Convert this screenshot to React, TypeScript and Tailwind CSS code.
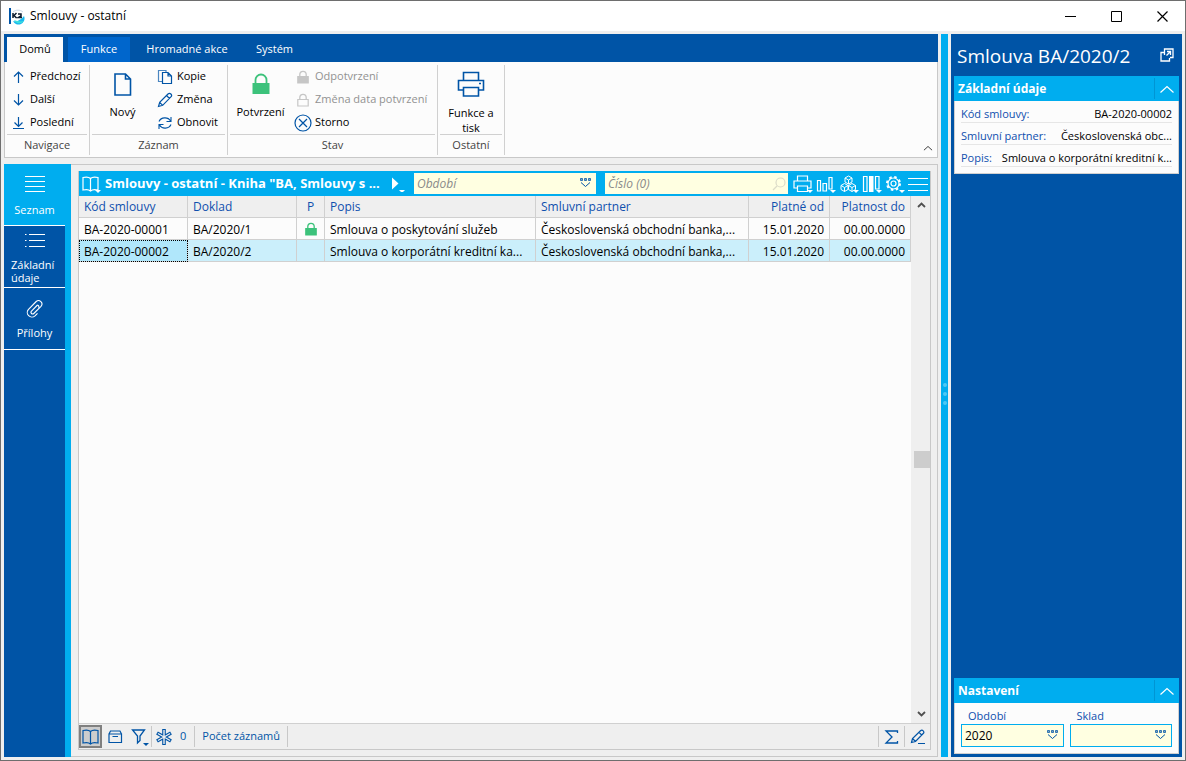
import React from "react";

type IconProps = { className?: string; size?: number };
type SvgProps = IconProps & { children: React.ReactNode; box?: number };

function Svg({ className = "", size = 16, box, children }: SvgProps) {
  const b = box ?? size;
  return (
    <svg
      className={"shrink-0 " + className}
      width={size}
      height={size}
      viewBox={`0 0 ${b} ${b}`}
      fill="none"
      stroke="currentColor"
      strokeWidth="1.2"
      aria-hidden="true"
    >
      {children}
    </svg>
  );
}

const ArrowUp = () => <Svg><path d="M8.500 14V3M4 7.500 8.500 3 13 7.500" /></Svg>;
const ArrowDown = () => <Svg><path d="M8.500 2v11M4 8.500 8.500 13 13 8.500" /></Svg>;
const ArrowLast = () => <Svg><path d="M8.500 2v9.500M4.500 7.500l4 4 4-4M3 13.500h11" /></Svg>;
const NewDoc = () => (
  <Svg size={26} className="text-[#0054a6]">
    <path strokeWidth="1.600" d="M5 3h10.500L20.500 8V24H5zM15.500 3v5h5" />
  </Svg>
);
const Copy = () => (
  <Svg>
    <path d="M5 12.500H1.500v-11h7.500v2" opacity=".7" />
    <path d="M5.500 3.500h5.500l3.500 3.500v7.500h-9zM11 3.500V7h3.500" />
  </Svg>
);
const Pencil = () => (
  <Svg><path d="M1.500 14.500l1.200-4.200L11 2a1.900 1.900 0 0 1 2.900 2.900L5.700 13.300zM2.700 10.300l3 3M9.500 3.500l3 3" /></Svg>
);
const Refresh = () => (
  <Svg><path strokeWidth="1.100" d="M2 6.500C4 2 11 1.500 13.500 6M14 2v4.500H9.500M14 9.500c-2 4.500-9 5-11.500.500M2 14V9.500h4.500" /></Svg>
);
const LockBig = () => (
  <Svg size={26} className="text-[#3cc27b]">
    <path strokeWidth="1.800" d="M7.500 13V9a5.500 5.500 0 0 1 11 0v4" />
    <path fill="currentColor" stroke="none" d="M4.500 12h17v11h-17z" />
  </Svg>
);
function LockSmall({ filled = true, className = "" }: { filled?: boolean; className?: string }) {
  return (
    <Svg size={14} className={className}>
      <path strokeWidth="1.300" d="M3.800 7V4.500a3.200 3.200 0 0 1 6.400 0V7" />
      <path fill={filled ? "currentColor" : "none"} d="M1.800 6.500h10.400v6.500H1.800z" />
    </Svg>
  );
}
const Cancel = () => (
  <Svg size={18}><circle cx="9" cy="9" r="8" /><path d="m5 5 8 8M13 5l-8 8" /></Svg>
);
const PrinterBig = () => (
  <Svg size={28} className="text-[#0054a6]">
    <path strokeWidth="1.600" d="M6.500 10.500V2.500h15v8M6.500 20H1.500v-9.500h25V20h-5M6.500 17.500h15V26h-15zM22 13.500h2" />
  </Svg>
);
const Caret = () => <path d="M14 16h6l-3 3z" fill="currentColor" stroke="none" />;
const Book = ({ caret = false }: { caret?: boolean }) => (
  <Svg size={20}>
    <path d="M9.500 4.500c-1.500-1.500-5.500-1.500-7.500-1v12.500c2-.500 6-.500 7.500 1 1.500-1.500 5.500-1.500 7.500-1V3.500c-2-.500-6-.500-7.500 1zM9.500 4.500V17" />
    {caret && <Caret />}
  </Svg>
);
const Printer = () => (
  <Svg size={20}>
    <path d="M4.500 7V2h10v5M4.500 14H1V7h17v7h-3.500M4.500 12h10v5.500h-10z" /><Caret />
  </Svg>
);
const Chart = () => (
  <Svg size={20}><path d="M1.500 6.500h3V17h-3zM7 9.500h3.500V17H7zM13 3.500h3V15h-3z" /><Caret /></Svg>
);
const Cubes = () => (
  <Svg size={20}>
    <path strokeWidth="1" d="m9.500 2 3.500 2v4l-3.500 2L6 8V4zM6 4l3.500 2L13 4M9.500 6v4M5.500 9.500l3.500 2v4l-3.500 2-3.500-2v-4zM2 11.500l3.500 2 3.500-2M5.500 13.500v4M13 9.500l3.500 2v4l-3.500 2-3.500-2v-4zM9.500 11.500l3.500 2 3.500-2M13 13.500v4" />
    <Caret />
  </Svg>
);
const Columns = () => (
  <Svg size={20}>
    <path d="M1.500 2.500h3.500v15H1.500zM13.500 2.500h3.500V15h-3.500z" />
    <path d="M7 2h4.500v16H7z" fill="currentColor" stroke="none" /><Caret />
  </Svg>
);
const Gear = () => (
  <Svg size={20}>
    <circle cx="8.500" cy="9.500" r="5.500" /><circle cx="8.500" cy="9.500" r="2.500" />
    <circle cx="8.500" cy="9.500" r="6.500" strokeWidth="2" strokeDasharray="2.500 2.600" /><Caret />
  </Svg>
);
const Menu = () => <Svg size={20}><path d="M0 4.500h20M0 10.500h20M0 16.500h20" /></Svg>;
const Play = () => (
  <Svg size={16}>
    <path d="M3 1.500v12L9.500 7.500zM10 14h6l-3 3z" fill="currentColor" stroke="none" />
  </Svg>
);
const Search = () => <Svg><circle cx="9.500" cy="6.500" r="4.500" /><path d="m6 10-4 4" /></Svg>;
function Lookup() {
  return (
    <svg className="shrink-0 text-[#0054a6]" width="13" height="12" viewBox="0 0 13 12" fill="none" stroke="currentColor" aria-hidden="true">
      <path fill="currentColor" fillOpacity=".5" strokeOpacity=".75" d="M1.500 1.500h2v2h-2zM5.500 1.500h2v2h-2zM9.500 1.500h2v2h-2z" />
      <path d="M2 5.500 6.500 9.500l4.500-4" />
    </svg>
  );
}
const ChevronUp = ({ size = 16 }: IconProps) => <Svg size={size} box={16}><path d="m1.500 11.500 6.500-6 6.500 6" /></Svg>;
const List = () => <Svg size={22}><path d="M1 2.500h20M1 7.500h20M1 12.500h20M1 17.500h20" /></Svg>;
const Bullets = () => (
  <Svg size={22}><path d="M5 5.500h16M5 11.500h16M5 17.500h16M1 5.500h1.500M1 11.500h1.500M1 17.500h1.500" /></Svg>
);
const Clip = () => (
  <Svg size={20}>
    <path strokeWidth="1.100" d="M12.500 6 6.500 12.200a1.600 1.600 0 0 0 2.300 2.300L16 7.300a3.400 3.400 0 0 0-4.800-4.800L3.500 10.300a4.600 4.600 0 0 0 6.500 6.500l2.500-2.500M12.500 6a1.600 1.600 0 0 1 1 2.500" />
  </Svg>
);
const Popout = () => (
  <Svg size={16}><path strokeWidth="1.300" d="M5 5.500H2V14h8.500v-3M5.500 8V2H14v8.500h-3M7.500 8.500 11.500 4.500M8 4.500h3.500V8" /></Svg>
);
const Box = () => <Svg><path d="M2 5h12.500v8.500H2zM2 5l1.500-3H13l1.500 3M5.500 7.500h5.500" /></Svg>;
const Filter = () => (
  <Svg size={20}><path d="M1.500 3h12L9 9v4.500L6.500 16V9z" strokeWidth="1.300" /><path d="M12 16h6l-3 3z" fill="currentColor" stroke="none" /></Svg>
);
const Asterisk = () => (
  <Svg>
    <path strokeWidth="3.600" d="M8 0v16M1 4l14 8M15 4 1 12" />
    <path strokeWidth="1.400" stroke="#efefef" d="M8 1v14M1.900 4.500l12.200 7M14.100 4.500l-12.200 7" />
  </Svg>
);
const Sigma = () => <Svg><path strokeWidth="1.300" d="M13.500 4V2H2l6 6-6 6h11.500v-2" /></Svg>;
const Edit = () => (
  <Svg><path d="M1.500 13.500l1-4L10.500 1.800a1.800 1.800 0 0 1 2.700 2.700L5.500 12.500zM2.500 9.500l3 3M9 3.300l2.700 2.700M8 14.500h7" /></Svg>
);
const Logo = () => (
  <svg width="17" height="17" viewBox="0 0 17 17" aria-hidden="true" className="shrink-0">
    <path d="M0 0h2v16H0z" fill="#0054a6" />
    <path d="M15 8a6 6 0 0 1-11 5c4 1 8-1 11-5z" fill="#19b9ef" />
    <path d="M5 12a6 6 0 0 0 10 1c-4 1-7 0-10-1z" fill="#3fe0dc" />
    <path d="M4 4c3-2.500 7-2.500 10 0" fill="none" stroke="#c9d9ea" />
    <path d="M4 5v5M7.500 5 5 7.500 7.500 10M9 6h3v2L9.500 9.500H13" fill="none" stroke="#0b1b2e" strokeWidth="1.500" />
  </svg>
);

function SmallCommand({ icon, label, disabled = false }: { icon: React.ReactNode; label: string; disabled?: boolean }) {
  return (
    <button
      type="button"
      disabled={disabled}
      className="flex h-[23px] items-center gap-[2px] whitespace-nowrap text-[#0054a6] disabled:text-[#c6c6c6]"
    >
      <span className="flex w-5 justify-center">{icon}</span>
      <span className={disabled ? "text-[#929292]" : "text-black"}>{label}</span>
    </button>
  );
}

function Group({ title, className, children }: { title: string; className: string; children: React.ReactNode }) {
  return (
    <section className={"flex shrink-0 flex-col border-r border-[#d0d0d0] px-[2px] " + className}>
      <div className="flex h-[69px] items-start justify-between text-[11px]">{children}</div>
      <h2 className="border-t border-[#d0d0d0] text-center text-[11px] leading-5 text-[#444]">{title}</h2>
    </section>
  );
}

function Ribbon() {
  return (
    <header className="shrink-0 text-[11px]">
      <nav className="flex h-7 items-end bg-[#0054a6] pl-[3px] text-white">
        <button type="button" className="h-[25px] w-14 bg-[#fcfcfc] text-black">Domů</button>
        <button type="button" className="ml-[5px] h-[25px] w-[62px] bg-[#0066cc]">Funkce</button>
        <button type="button" className="h-[25px] w-[114px]">Hromadné akce</button>
        <button type="button" className="h-[25px] w-[61px]">Systém</button>
      </nav>
      <div className="flex h-24 border border-t-0 border-[#c8c8c8] bg-[#fcfcfc] pt-[3px] pb-[2px]">
        <Group title="Navigace" className="w-[85px]">
          <div className="ml-px">
            <SmallCommand icon={<ArrowUp />} label="Předchozí" />
            <SmallCommand icon={<ArrowDown />} label="Další" />
            <SmallCommand icon={<ArrowLast />} label="Poslední" />
          </div>
        </Group>
        <Group title="Záznam" className="w-[138px]">
          <button type="button" className="flex w-[61px] flex-col items-center gap-[7px] pt-[6px]">
            <NewDoc />
            Nový
          </button>
          <div className="w-[70px]">
            <SmallCommand icon={<Copy />} label="Kopie" />
            <SmallCommand icon={<Pencil />} label="Změna" />
            <SmallCommand icon={<Refresh />} label="Obnovit" />
          </div>
        </Group>
        <Group title="Stav" className="w-[210px]">
          <button type="button" className="flex w-[61px] flex-col items-center gap-[7px] pt-[6px]">
            <LockBig />
            Potvrzení
          </button>
          <div className="w-[142px]">
            <SmallCommand icon={<LockSmall />} label="Odpotvrzení" disabled />
            <SmallCommand icon={<LockSmall filled={false} />} label="Změna data potvrzení" disabled />
            <SmallCommand icon={<Cancel />} label="Storno" />
          </div>
        </Group>
        <Group title="Ostatní" className="w-[67px]">
          <button type="button" className="flex w-full flex-col items-center gap-[7px] px-1 pt-[5px] leading-[15px]">
            <PrinterBig />
            Funkce a tisk
          </button>
        </Group>
        <button type="button" aria-label="Sbalit pás karet" className="mt-auto mr-1 mb-[2px] ml-auto text-black">
          <ChevronUp size={10} />
        </button>
      </div>
    </header>
  );
}

function SideTab({ icon, label, active = false }: { icon: React.ReactNode; label: string; active?: boolean }) {
  return (
    <button
      type="button"
      className={
        "flex h-[62px] w-full flex-col items-center justify-center gap-[7px] border-b border-white px-[7px] text-left text-[11px] leading-[13px] " +
        (active ? "bg-[#00adef]" : "")
      }
    >
      {icon}
      <span>{label}</span>
    </button>
  );
}

function TextColumnHead({ label, align = "text-left" }: { label: string; align?: string }) {
  return <th className={"h-[22px] border-r border-b border-[#d0d0d0] px-[5px] font-normal " + align}>{label}</th>;
}

const rows = [
  { code: "BA-2020-00001", doc: "BA/2020/1", locked: true, text: "Smlouva o poskytování služeb", partner: "Československá obchodní banka,...", from: "15.01.2020", to: "00.00.0000", current: false },
  { code: "BA-2020-00002", doc: "BA/2020/2", locked: false, text: "Smlouva o korporátní kreditní ka...", partner: "Československá obchodní banka,...", from: "15.01.2020", to: "00.00.0000", current: true },
];

const cell = "h-[22px] truncate border-r border-b border-[#d0d0d0] px-[5px] pt-[2px]";

function Records() {
  return (
    <div className="flex min-h-0 flex-1 bg-[#fcfcfc]">
      <div className="min-w-0 flex-1">
        <table className="w-full table-fixed border-separate border-spacing-0 text-xs">
          <colgroup>
            <col className="w-[109px]" />
            <col className="w-[109px]" />
            <col className="w-[28px]" />
            <col className="w-[211px]" />
            <col className="w-[213px]" />
            <col className="w-[81px]" />
            <col className="w-[81px]" />
          </colgroup>
          <thead className="bg-[#efefef] text-[#0f4fae]">
            <tr>
              <TextColumnHead label="Kód smlouvy" />
              <TextColumnHead label="Doklad" />
              <TextColumnHead label="P" align="text-center" />
              <TextColumnHead label="Popis" />
              <TextColumnHead label="Smluvní partner" />
              <TextColumnHead label="Platné od" align="text-right" />
              <TextColumnHead label="Platnost do" align="text-right" />
            </tr>
          </thead>
          <tbody>
            {rows.map((r) => (
              <tr key={r.code} className={r.current ? "bg-[#cbeffb]" : ""}>
                <td className={cell + (r.current ? " bg-[#b0e7fb] outline-1 -outline-offset-1 outline-dotted outline-black" : "")}>{r.code}</td>
                <td className={cell}>{r.doc}</td>
                <td className="border-r border-b border-[#d0d0d0]">
                  {r.locked && <LockSmall className="mx-auto text-[#3cc27b]" />}
                </td>
                <td className={cell}>{r.text}</td>
                <td className={cell}>{r.partner}</td>
                <td className={cell + " text-right"}>{r.from}</td>
                <td className={cell + " text-right"}>{r.to}</td>
              </tr>
            ))}
          </tbody>
        </table>
      </div>
      <div className="flex w-[19px] shrink-0 flex-col items-center bg-[#efefef] pl-[2px] text-[#505050]">
        <svg width="9" height="6" viewBox="0 0 9 6" className="mt-[6px]" fill="none" stroke="currentColor" strokeWidth="1.800" aria-hidden="true"><path d="m1 5 3.500-3.500L8 5" /></svg>
        <div className="flex-1" />
        <div className="h-[17px] w-4 bg-[#cdcdcd]" />
        <div className="flex-1" />
        <svg width="9" height="6" viewBox="0 0 9 6" className="mb-[6px]" fill="none" stroke="currentColor" strokeWidth="1.800" aria-hidden="true"><path d="M1 1l3.500 3.500L8 1" /></svg>
      </div>
    </div>
  );
}

function GridToolbar() {
  const tools = [
    { name: "Tisk", icon: <Printer /> },
    { name: "Grafy", icon: <Chart /> },
    { name: "Kostky", icon: <Cubes /> },
    { name: "Sloupce", icon: <Columns /> },
    { name: "Nastavení", icon: <Gear /> },
    { name: "Nabídka", icon: <Menu /> },
  ];
  return (
    <div className="flex h-[25px] shrink-0 items-center bg-[#00adef] pl-[2px] text-white">
      <button type="button" aria-label="Kniha"><Book caret /></button>
      <h1 className="ml-1 w-[276px] text-[13px] font-bold whitespace-nowrap">Smlouvy - ostatní - Kniha "BA, Smlouvy s ...</h1>
      <button type="button" aria-label="Spustit" className="ml-2"><Play /></button>
      <div className="relative ml-[9px] h-[21px] flex-1">
        <select aria-label="Období" defaultValue="" className="block h-full w-full appearance-none bg-[#ffffe1] px-[3px] text-xs text-[#8a8a8a] italic">
          <option value="">Období</option>
        </select>
        <span className="pointer-events-none absolute top-1 right-1"><Lookup /></span>
      </div>
      <label className="ml-[9px] flex h-[21px] flex-1 items-center bg-[#ffffe1] pr-px text-[#dcdcc8]">
        <input aria-label="Číslo" placeholder="Číslo (0)" className="min-w-0 flex-1 px-[3px] text-xs text-black italic placeholder:text-[#8a8a8a]" />
        <Search />
      </label>
      <div className="ml-[5px] flex gap-[3px] pr-[2px]">
        {tools.map((t) => (
          <button key={t.name} type="button" aria-label={t.name}>{t.icon}</button>
        ))}
      </div>
    </div>
  );
}

function StatusBar() {
  return (
    <footer className="flex h-[26px] shrink-0 items-center border-t border-[#d0d0d0] bg-[#efefef] text-[11px] text-[#0054a6]">
      <button type="button" aria-label="Kniha" className="flex h-[23px] w-[23px] items-center justify-center border-2 border-[#808080] bg-[#cdcdcd]"><Book /></button>
      <button type="button" aria-label="Kontejner" className="ml-[5px]"><Box /></button>
      <button type="button" aria-label="Filtr" className="ml-2"><Filter /></button>
      <span className="flex h-[21px] items-center gap-2 border-l border-[#c8c8c8] px-1"><Asterisk /> 0</span>
      <span className="ml-1 flex h-[21px] items-center border-x border-[#c8c8c8] px-[7px]">Počet záznamů</span>
      <button type="button" aria-label="Součet" className="ml-auto flex h-[21px] w-[26px] items-center justify-center border-l border-[#c8c8c8]"><Sigma /></button>
      <button type="button" aria-label="Upravit" className="flex h-[21px] w-[26px] items-center justify-center border-l border-[#c8c8c8]"><Edit /></button>
    </footer>
  );
}

function PanelHead({ title }: { title: string }) {
  return (
    <div className="flex h-[25px] items-center bg-[#00adef] pl-1 text-white">
      <h3 className="flex-1 text-xs font-bold">{title}</h3>
      <button type="button" aria-label={"Sbalit " + title} className="flex h-[21px] w-[25px] items-center justify-center border-l border-[#0095d4]">
        <ChevronUp />
      </button>
    </div>
  );
}

function Detail({ name, value }: { name: string; value: string }) {
  return (
    <div className="flex h-[22px] items-end gap-1 border-b border-[#e6e6e6] leading-4 whitespace-nowrap">
      <dt className="shrink-0 text-[#0f4fae]">{name}</dt>
      <dd className="flex-1 text-right">{value}</dd>
    </div>
  );
}

function Setting({ id, label, value }: { id: string; label: string; value: string }) {
  return (
    <div className="min-w-0 flex-1">
      <label htmlFor={id} className="block pt-px pl-[7px] leading-4 text-[#0f4fae]">{label}</label>
      <div className="relative h-[23px]">
        <select id={id} defaultValue={value} className="block h-full w-full appearance-none border border-[#00adef] bg-[#ffffe1] px-[3px] text-xs text-black">
          <option value={value}>{value}</option>
        </select>
        <span className="pointer-events-none absolute top-[5px] right-[5px]"><Lookup /></span>
      </div>
    </div>
  );
}

function DetailPanel() {
  return (
    <aside className="flex w-[231px] shrink-0 flex-col bg-[#0054a6] px-[3px] pb-[3px] text-[11px]">
      <div className="flex h-[42px] items-center justify-between pt-[3px] pr-1 pl-[3px] text-white">
        <h2 className="text-[19px]">Smlouva BA/2020/2</h2>
        <button type="button" aria-label="Otevřít v okně" className="pb-1"><Popout /></button>
      </div>
      <section>
        <PanelHead title="Základní údaje" />
        <dl className="border border-t-0 border-[#d0d0d0] bg-[#fcfcfc] px-[6px] pb-[6px]">
          <Detail name="Kód smlouvy:" value="BA-2020-00002" />
          <Detail name="Smluvní partner:" value="Československá obc..." />
          <Detail name="Popis:" value="Smlouva o korporátní kreditní k..." />
        </dl>
      </section>
      <section className="mt-auto">
        <PanelHead title="Nastavení" />
        <div className="flex gap-[6px] border border-t-0 border-[#d0d0d0] bg-[#fcfcfc] px-[6px] pt-1 pb-[6px]">
          <Setting id="period" label="Období" value="2020" />
          <Setting id="stock" label="Sklad" value="" />
        </div>
      </section>
    </aside>
  );
}

function TitleBar() {
  return (
    <div className="flex h-[30px] shrink-0 items-center bg-white pl-2 text-xs">
      <Logo />
      <span className="ml-1 flex-1">Smlouvy - ostatní</span>
      <button type="button" aria-label="Minimalizovat" className="flex w-[46px] justify-center"><Svg size={11}><path strokeWidth="1" d="M0 5.500h11" /></Svg></button>
      <button type="button" aria-label="Maximalizovat" className="flex w-[46px] justify-center"><Svg size={11}><path strokeWidth="1" d="M.500.500h10v10H.500z" /></Svg></button>
      <button type="button" aria-label="Zavřít" className="flex w-[46px] justify-center"><Svg size={11}><path d="m.500.500 10 10M10.500.500l-10 10" /></Svg></button>
    </div>
  );
}

export default function App() {
  return (
    <div className="flex h-screen flex-col overflow-hidden border border-[#6e6e6e] bg-[#efefef] font-['Open_Sans','Noto_Sans',sans-serif] text-black">
      <TitleBar />
      <div className="flex min-h-0 flex-1 gap-[3px] px-[3px] pt-[3px] pb-[3px]">
        <main className="flex min-w-0 flex-1 flex-col gap-[6px]">
          <Ribbon />
          <div className="flex min-h-0 flex-1">
            <nav className="flex w-[67px] shrink-0 bg-[#00adef] pr-[6px] text-white">
              <div className="w-full bg-[#0054a6]">
                <SideTab icon={<List />} label="Seznam" active />
                <SideTab icon={<Bullets />} label="Základní údaje" />
                <SideTab icon={<Clip />} label="Přílohy" />
              </div>
            </nav>
            <div className="flex min-w-0 flex-1 border border-l-0 border-[#c8c8c8] py-[6px] pr-[6px] pl-[7px]">
              <div className="flex min-w-0 flex-1 flex-col border-x border-b border-[#c8c8c8]">
                <GridToolbar />
                <Records />
                <StatusBar />
              </div>
            </div>
          </div>
        </main>
        <div className="flex w-[7px] shrink-0 flex-col items-center justify-center gap-[5px] bg-[#00adef] pb-1">
          <i className="h-1 w-1 rounded-full bg-[#4dc8f5]" />
          <i className="h-1 w-1 rounded-full bg-[#4dc8f5]" />
          <i className="h-1 w-1 rounded-full bg-[#4dc8f5]" />
        </div>
        <DetailPanel />
      </div>
    </div>
  );
}
